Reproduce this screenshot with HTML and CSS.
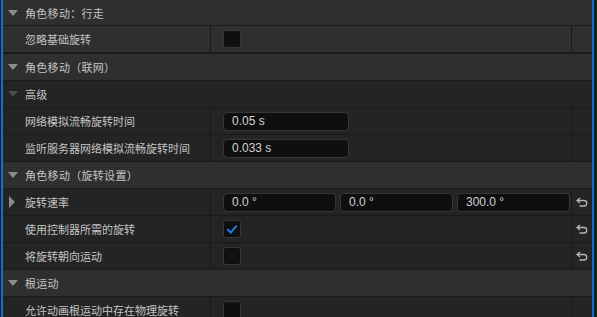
FILE: index.html
```html
<!DOCTYPE html>
<html lang="zh-CN">
<head>
    <meta charset="UTF-8">
    <title>细节面板</title>
    <link rel="stylesheet" href="styles.css">
</head>
<body>
    <div class="panel">
        <div class="row category first">
            <span class="arrow down"></span>
            <span class="label">角色移动：行走</span>
        </div>
        <div class="row prop hover thick">
            <div class="name">忽略基础旋转</div>
            <div class="value"><span class="check"></span></div>
            <div class="reset"></div>
        </div>

        <div class="row category">
            <span class="arrow down"></span>
            <span class="label">角色移动（联网）</span>
        </div>
        <div class="row subcategory">
            <span class="arrow down dim"></span>
            <span class="label">高级</span>
        </div>
        <div class="row prop">
            <div class="name">网络模拟流畅旋转时间</div>
            <div class="value"><div class="field">0.05 s</div></div>
            <div class="reset"></div>
        </div>
        <div class="row prop">
            <div class="name">监听服务器网络模拟流畅旋转时间</div>
            <div class="value"><div class="field">0.033 s</div></div>
            <div class="reset"></div>
        </div>

        <div class="row category">
            <span class="arrow down"></span>
            <span class="label">角色移动（旋转设置）</span>
        </div>
        <div class="row prop">
            <div class="name"><span class="arrow right"></span>旋转速率</div>
            <div class="value vector">
                <div class="field">0.0 °</div>
                <div class="field">0.0 °</div>
                <div class="field">300.0 °</div>
            </div>
            <div class="reset">
                <svg class="undo" viewBox="0 0 12 10" width="12" height="10"><path d="M4 1 L1 3.5 L4 6 M1.5 3.5 H8 A2.7 2.7 0 0 1 8 9 H3.5"/></svg>
            </div>
        </div>
        <div class="row prop">
            <div class="name">使用控制器所需的旋转</div>
            <div class="value">
                <span class="check">
                    <svg viewBox="0 0 18 18" width="17" height="17"><path d="M4.5 9.5 L7.5 12.5 L13.5 5.5"/></svg>
                </span>
            </div>
            <div class="reset">
                <svg class="undo" viewBox="0 0 12 10" width="12" height="10"><path d="M4 1 L1 3.5 L4 6 M1.5 3.5 H8 A2.7 2.7 0 0 1 8 9 H3.5"/></svg>
            </div>
        </div>
        <div class="row prop">
            <div class="name">将旋转朝向运动</div>
            <div class="value"><span class="check"></span></div>
            <div class="reset">
                <svg class="undo" viewBox="0 0 12 10" width="12" height="10"><path d="M4 1 L1 3.5 L4 6 M1.5 3.5 H8 A2.7 2.7 0 0 1 8 9 H3.5"/></svg>
            </div>
        </div>

        <div class="row category">
            <span class="arrow down"></span>
            <span class="label">根运动</span>
        </div>
        <div class="row prop">
            <div class="name">允许动画根运动中存在物理旋转</div>
            <div class="value"><span class="check"></span></div>
            <div class="reset"></div>
        </div>
    </div>
</body>
</html>
```

FILE: styles.css
```css
body {
    margin: 0;
    background-color: #1a1a1a;
    font-family: "Noto Sans CJK SC", "Noto Sans", sans-serif;
    font-size: 11px;
    color: #c4c4c4;
    height: 317px;
    overflow: hidden;
}
.panel {
    width: 589px;
    margin-left: 1px;
    border-left: 2px solid #0e6fd6;
    border-right: 2px solid #0e6fd6;
    background-color: #1a1a1a;
}
.row {
    display: flex;
    align-items: center;
    height: 26px;
    border-bottom: 1px solid #1a1a1a;
    box-sizing: content-box;
}
.row.first {
    height: 25px;
}
.row.thick {
    border-bottom-width: 2px;
}
.category {
    background-color: #2f2f2f;
    padding-left: 5px;
}
.subcategory {
    background-color: #242424;
    padding-left: 5px;
}
.label {
    margin-left: 7px;
    letter-spacing: 0.3px;
}
.arrow {
    display: inline-block;
    width: 0;
    height: 0;
}
.arrow.down {
    border-left: 5px solid transparent;
    border-right: 5px solid transparent;
    border-top: 6px solid #8c8c8c;
}
.arrow.down.dim {
    border-top-color: #4c4c4c;
}
.arrow.right {
    border-top: 6px solid transparent;
    border-bottom: 6px solid transparent;
    border-left: 6px solid #8c8c8c;
    position: absolute;
    left: 6px;
    top: 7px;
}
.prop {
    background-color: #242424;
}
.prop.hover {
    background-color: #2f2f2f;
}
.name {
    position: relative;
    width: 185px;
    height: 100%;
    padding-left: 22px;
    line-height: 26px;
    border-right: 1px solid #1a1a1a;
    white-space: nowrap;
}
.value {
    width: 348px;
    height: 100%;
    padding-left: 12px;
    display: flex;
    align-items: center;
    border-right: 1px solid #1a1a1a;
}
.value.vector {
    gap: 4px;
}
.vector .field {
    width: 103px;
}
.field {
    width: 116px;
    height: 17px;
    padding-left: 8px;
    background-color: #0f0f0f;
    border: 1px solid #363636;
    border-radius: 4px;
    font-family: "Liberation Sans", Arial, sans-serif;
    font-size: 12px;
    line-height: 17px;
    color: #d2d2d2;
}
.check {
    width: 16px;
    height: 16px;
    background-color: #0f0f0f;
    border: 1px solid #363636;
    border-radius: 3px;
    display: flex;
}
.check svg path {
    fill: none;
    stroke: #1d7fe6;
    stroke-width: 2.2;
    stroke-linecap: square;
}
.reset {
    flex: 1;
    height: 100%;
    display: flex;
    align-items: center;
    justify-content: center;
}
.undo path {
    fill: none;
    stroke: #b4b4b4;
    stroke-width: 1.3;
}
```
